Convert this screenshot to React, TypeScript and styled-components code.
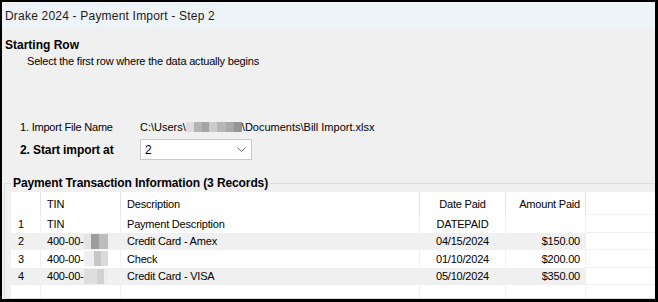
import React from 'react';
import styled, { createGlobalStyle } from 'styled-components';

const GlobalStyle = createGlobalStyle`
  html, body {
    margin: 0;
    padding: 0;
    background: #000;
  }
  body {
    font-family: "Liberation Sans", Arial, sans-serif;
  }
  #root {
    padding: 2px 0 0 2px;
  }
`;

const Window = styled.div`
  width: 653px;
  height: 297px;
  overflow: hidden;
  background: #f0f0f0;
  display: flex;
  flex-direction: column;
  color: #000;
  font-size: 11px;
  letter-spacing: -0.2px;
`;

const TitleBar = styled.div`
  height: 27px;
  flex: none;
  background: #eef3f8;
  padding: 1px 0 0 3px;
  box-sizing: border-box;
  display: flex;
  align-items: center;
  font-size: 12px;
  letter-spacing: 0.2px;
  color: #1a1a1a;
`;

const Content = styled.div`
  flex: 1;
  display: flex;
  flex-direction: column;
  padding-top: 8px;
`;

const Heading = styled.div`
  font-weight: bold;
  font-size: 12px;
  letter-spacing: 0;
  line-height: 16px;
  padding-left: 3px;
`;

const SubText = styled.div`
  line-height: 16px;
  padding-left: 25px;
`;

const FieldRow = styled.div<{ $gap: number; $h: number }>`
  display: flex;
  align-items: center;
  margin-top: ${p => p.$gap}px;
  height: ${p => p.$h}px;
  padding-left: 18px;
`;

const FieldLabel = styled.div<{ $bold?: boolean }>`
  width: 119px;
  flex: none;
  font-weight: ${p => (p.$bold ? 'bold' : 'normal')};
  font-size: ${p => (p.$bold ? '12px' : '11px')};
  letter-spacing: ${p => (p.$bold ? '-0.1px' : '-0.2px')};
`;

const FieldValue = styled.div`
  padding-left: 1px;
  display: flex;
  align-items: center;
  white-space: nowrap;
  letter-spacing: 0;
`;

const Redacted = styled.span<{ $kind: 'path' | 'a' | 'b' | 'c' }>`
  display: inline-block;
  flex: none;
  width: ${p => (p.$kind === 'path' ? 56 : 24)}px;
  height: ${p => (p.$kind === 'path' ? 10 : 15)}px;
  background: ${p =>
    p.$kind === 'path'
      ? 'linear-gradient(90deg, #dcdcdc 0 14%, #b4b4b4 14% 28%, #a4a4a4 28% 41%, #cbcbcb 41% 56%, #b6b6b6 56% 71%, #a9a9a9 71% 85%, #959595 85% 100%)'
      : p.$kind === 'a'
      ? 'linear-gradient(90deg, #e4e4e4 0 30%, #9e9e9e 30% 62%, #bdbdbd 62% 100%)'
      : p.$kind === 'b'
      ? 'linear-gradient(90deg, #efefef 0 40%, #c6c6c6 40% 70%, #dadada 70% 100%)'
      : 'linear-gradient(90deg, #dedede 0 55%, #d2d2d2 55% 85%, #ececec 85% 100%)'};
`;

const Select = styled.div`
  width: 112px;
  height: 21px;
  box-sizing: border-box;
  margin-left: 1px;
  background: #fff;
  border: 1px solid #c9c9c9;
  display: flex;
  align-items: center;
  justify-content: space-between;
  padding: 0 5px 0 4px;
  font-size: 12px;
`;

const Chevron = () => (
  <svg width="9" height="5" viewBox="0 0 9 5">
    <polyline points="0.5,0.5 4.5,4.5 8.5,0.5" fill="none" stroke="#6d6d6d" strokeWidth="1" />
  </svg>
);

const Group = styled.fieldset`
  flex: 1;
  margin: 15px 0 0 2px;
  border: 1px solid #dcdcdc;
  border-right: none;
  padding: 1px 0 0 6px;
  min-width: 0;
  display: flex;
  flex-direction: column;
`;

const Legend = styled.legend`
  padding: 0 2px;
  font-weight: bold;
  font-size: 12px;
  letter-spacing: -0.1px;
  line-height: 16px;
`;

const Table = styled.div`
  flex: 1;
  background: #fff;
  display: flex;
  flex-direction: column;
`;

const Row = styled.div<{ $h: number }>`
  display: grid;
  grid-template-columns: 30px 80px 299px 86px 80px 1fr;
  height: ${p => p.$h}px;
  flex: none;
`;

const Cell = styled.div<{ $align?: 'left' | 'center' | 'right'; $shade?: boolean; $head?: boolean }>`
  display: flex;
  align-items: center;
  justify-content: ${p => (p.$align === 'center' ? 'center' : p.$align === 'right' ? 'flex-end' : 'flex-start')};
  padding: ${p => (p.$align === 'right' ? '0 5px 0 0' : p.$align === 'center' ? '0' : '0 0 0 6px')};
  background: ${p => (p.$shade ? '#f0f0f0' : '#fff')};
  border-right: 1px solid ${p => (p.$head ? '#e3e3e3' : '#f0f0f0')};
  white-space: nowrap;
  overflow: hidden;
`;

const IndexCell = styled(Cell)`
  padding-left: 7px;
`;

const Filler = styled.div<{ $last?: boolean }>`
  background: #fff;
  border-bottom: ${p => (p.$last ? 'none' : '1px solid #efefef')};
`;

const EmptyRow = styled.div`
  flex: 1;
  display: grid;
  grid-template-columns: 30px 80px 299px 86px 80px 1fr;
`;

const records = [
  { n: '1', tin: 'TIN', blur: null, desc: 'Payment Description', date: 'DATEPAID', amt: '' },
  { n: '2', tin: '400-00-', blur: 'a', desc: 'Credit Card - Amex', date: '04/15/2024', amt: '$150.00' },
  { n: '3', tin: '400-00-', blur: 'b', desc: 'Check', date: '01/10/2024', amt: '$200.00' },
  { n: '4', tin: '400-00-', blur: 'c', desc: 'Credit Card - VISA', date: '05/10/2024', amt: '$350.00' },
] as const;

export default function App() {
  return (
    <>
      <GlobalStyle />
      <Window>
        <TitleBar>Drake 2024 - Payment Import - Step 2</TitleBar>
        <Content>
          <Heading>Starting Row</Heading>
          <SubText>Select the first row where the data actually begins</SubText>

          <FieldRow $gap={50} $h={16}>
            <FieldLabel>1. Import File Name</FieldLabel>
            <FieldValue>
              C:\Users\
              <Redacted $kind="path" />
              \Documents\Bill Import.xlsx
            </FieldValue>
          </FieldRow>
          <FieldRow $gap={4} $h={21}>
            <FieldLabel $bold>2. Start import at</FieldLabel>
            <Select>
              <span>2</span>
              <Chevron />
            </Select>
          </FieldRow>

          <Group>
            <Legend>Payment Transaction Information (3 Records)</Legend>
            <Table>
              <Row $h={23}>
                <Cell $head />
                <Cell $head>TIN</Cell>
                <Cell $head>Description</Cell>
                <Cell $head $align="center">Date Paid</Cell>
                <Cell $head $align="right">Amount Paid</Cell>
                <Filler />
              </Row>
              {records.map((r, i) => (
                <Row key={r.n} $h={17.5}>
                  <IndexCell $shade={i % 2 === 1}>{r.n}</IndexCell>
                  <Cell $shade={i % 2 === 1}>
                    {r.tin}
                    {r.blur && <Redacted $kind={r.blur} />}
                  </Cell>
                  <Cell $shade={i % 2 === 1}>{r.desc}</Cell>
                  <Cell $shade={i % 2 === 1} $align="center">{r.date}</Cell>
                  <Cell $shade={i % 2 === 1} $align="right">{r.amt}</Cell>
                  <Filler />
                </Row>
              ))}
              <EmptyRow>
                <Cell />
                <Cell />
                <Cell />
                <Cell />
                <Cell />
                <Filler $last />
              </EmptyRow>
            </Table>
          </Group>
        </Content>
      </Window>
    </>
  );
}
